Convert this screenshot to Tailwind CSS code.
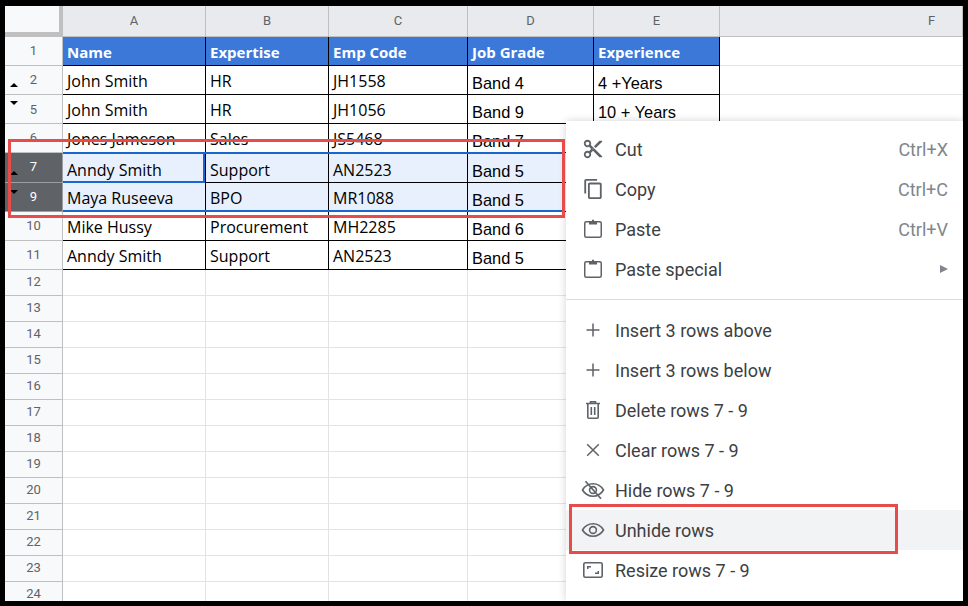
<!DOCTYPE html>
<html lang="en">
<head>
  <meta charset="UTF-8">
  <title>Unhide rows</title>
  <script src="https://cdn.jsdelivr.net/npm/@tailwindcss/browser@4"></script>
</head>
<body class="bg-black">
<div class="relative w-[968px] h-[606px] bg-black pt-[6px] pl-[5px] overflow-hidden">
  <div id="sheet" class="relative w-[958px] h-[595px] bg-white overflow-hidden grid grid-cols-[58px_143px_123px_139px_126px_126px_243px] auto-rows-min font-['Open_Sans',sans-serif] text-[16px] text-black"></div>

  <!-- hidden row arrows -->
  <div class="absolute left-[10px] top-[83px] w-0 h-0 border-x-[4px] border-x-transparent border-b-[4px] border-b-black"></div>
  <div class="absolute left-[10px] top-[101px] w-0 h-0 border-x-[4px] border-x-transparent border-t-[4px] border-t-black"></div>
  <div class="absolute left-[10px] top-[171px] w-0 h-0 border-x-[4px] border-x-transparent border-b-[4px] border-b-black"></div>
  <div class="absolute left-[10px] top-[190px] w-0 h-0 border-x-[4px] border-x-transparent border-t-[4px] border-t-black"></div>

  <!-- active cell + selection edges -->
  <div class="absolute left-[63px] top-[152px] w-[501px] h-[2px] bg-[#1a66d0]"></div>
  <div class="absolute left-[63px] top-[210px] w-[501px] h-[2px] bg-[#1a66d0]"></div>
  <div class="absolute left-[63px] top-[152px] w-[142px] h-[31px] border-2 border-l-0 border-[#1a66d0]"></div>

  <!-- context menu -->
  <div class="absolute left-[566px] top-[121px] w-[397px] h-[480px] bg-white shadow-[0_0_8px_rgba(0,0,0,0.18)] pt-[8px] font-['Roboto',sans-serif] text-[18px] text-[#3c4043]">
    <div class="flex items-center h-10 pl-[16px] pr-[15px]">
      <svg class="w-[22px] h-[22px] mr-[11px] shrink-0 fill-[#5f6368]" viewBox="0 0 24 24"><path d="M9.64 7.64c.23-.5.36-1.05.36-1.64 0-2.21-1.79-4-4-4S2 3.79 2 6s1.79 4 4 4c.59 0 1.14-.13 1.64-.36L10 12l-2.36 2.36C7.14 14.13 6.59 14 6 14c-2.21 0-4 1.79-4 4s1.79 4 4 4 4-1.79 4-4c0-.59-.13-1.14-.36-1.64L12 14l7 7h3v-1L9.64 7.64zM6 8c-1.1 0-2-.89-2-2s.9-2 2-2 2 .89 2 2-.9 2-2 2zm0 12c-1.1 0-2-.89-2-2s.9-2 2-2 2 .89 2 2-.9 2-2 2zm6-7.5c-.28 0-.5-.22-.5-.5s.22-.5.5-.5.5.22.5.5-.22.5-.5.5zM19 3l-6 6 2 2 7-7V3h-3z"/></svg>
      <span>Cut</span><span class="ml-auto text-[#80868b]">Ctrl+X</span>
    </div>
    <div class="flex items-center h-10 pl-[16px] pr-[15px]">
      <svg class="w-[22px] h-[22px] mr-[11px] shrink-0 fill-[#5f6368]" viewBox="0 0 24 24"><path d="M16 1H4c-1.1 0-2 .9-2 2v14h2V3h12V1zm3 4H8c-1.1 0-2 .9-2 2v14c0 1.100.9 2 2 2h11c1.100 0 2-.9 2-2V7c0-1.100-.9-2-2-2zm0 16H8V7h11v14z" transform="translate(0.5 0)"/></svg>
      <span>Copy</span><span class="ml-auto text-[#80868b]">Ctrl+C</span>
    </div>
    <div class="flex items-center h-10 pl-[16px] pr-[15px]">
      <svg class="w-[22px] h-[22px] mr-[11px] shrink-0" viewBox="0 0 22 22"><rect x="2.750" y="3.750" width="16.500" height="15.500" rx="1.500" fill="none" stroke="#5f6368" stroke-width="1.500"/><path d="M7 3h8v3.500H7zM10 1.800h2v2h-2z" fill="#5f6368"/></svg>
      <span>Paste</span><span class="ml-auto text-[#80868b]">Ctrl+V</span>
    </div>
    <div class="flex items-center h-10 pl-[16px] pr-[15px]">
      <svg class="w-[22px] h-[22px] mr-[11px] shrink-0" viewBox="0 0 22 22"><rect x="2.750" y="3.750" width="16.500" height="15.500" rx="1.500" fill="none" stroke="#5f6368" stroke-width="1.500"/><path d="M7 3h8v3.500H7zM10 1.800h2v2h-2z" fill="#5f6368"/></svg>
      <span>Paste special</span>
      <span class="ml-auto w-0 h-0 border-y-[4px] border-y-transparent border-l-[8px] border-l-[#80868b]"></span>
    </div>
    <div class="h-px bg-[#dadce0] mt-[10px] mb-[10px]"></div>
    <div class="flex items-center h-10 pl-[16px] pr-[15px]">
      <svg class="w-[22px] h-[22px] mr-[11px] shrink-0" viewBox="0 0 22 22"><path d="M11 4.500v13M4.500 11h13" stroke="#5f6368" stroke-width="1.500" fill="none"/></svg>
      <span>Insert 3 rows above</span>
    </div>
    <div class="flex items-center h-10 pl-[16px] pr-[15px]">
      <svg class="w-[22px] h-[22px] mr-[11px] shrink-0" viewBox="0 0 22 22"><path d="M11 4.500v13M4.500 11h13" stroke="#5f6368" stroke-width="1.500" fill="none"/></svg>
      <span>Insert 3 rows below</span>
    </div>
    <div class="flex items-center h-10 pl-[16px] pr-[15px]">
      <svg class="w-[22px] h-[22px] mr-[11px] shrink-0" viewBox="0 0 22 22"><path d="M4 4.500h14M8.500 4V2.800h5V4M5.800 5v13.200a1 1 0 0 0 1 1h8.400a1 1 0 0 0 1-1V5M9.300 8v8M12.700 8v8" stroke="#5f6368" stroke-width="1.600" fill="none"/></svg>
      <span>Delete rows 7 - 9</span>
    </div>
    <div class="flex items-center h-10 pl-[16px] pr-[15px]">
      <svg class="w-[22px] h-[22px] mr-[11px] shrink-0" viewBox="0 0 22 22"><path d="M5.200 5.200l11.600 11.600M16.800 5.200L5.200 16.800" stroke="#5f6368" stroke-width="1.500" fill="none"/></svg>
      <span>Clear rows 7 - 9</span>
    </div>
    <div class="flex items-center h-10 pl-[16px] pr-[15px]">
      <svg class="w-[22px] h-[22px] mr-[11px] shrink-0 overflow-visible" viewBox="0 0 22 22"><path d="M0.500 11C3 6.800 7 4.800 11 4.800s8 2 10.500 6.200C19 15.200 15 17.200 11 17.200S3 15.200 0.500 11z" stroke="#5f6368" stroke-width="1.600" fill="none"/><circle cx="11" cy="11" r="3.400" stroke="#5f6368" stroke-width="1.600" fill="none"/><path d="M3.500 2.200l15.500 17.600" stroke="#5f6368" stroke-width="1.700" fill="none"/></svg>
      <span>Hide rows 7 - 9</span>
    </div>
    <div class="flex items-center h-10 pl-[16px] pr-[15px] bg-[#f1f3f4]">
      <svg class="w-[22px] h-[22px] mr-[11px] shrink-0 overflow-visible" viewBox="0 0 22 22"><path d="M0.500 11C3 6.800 7 4.800 11 4.800s8 2 10.500 6.200C19 15.200 15 17.200 11 17.200S3 15.200 0.500 11z" stroke="#5f6368" stroke-width="1.600" fill="none"/><circle cx="11" cy="11" r="3.400" stroke="#5f6368" stroke-width="1.600" fill="none"/></svg>
      <span>Unhide rows</span>
    </div>
    <div class="flex items-center h-10 pl-[16px] pr-[15px]">
      <svg class="w-[22px] h-[22px] mr-[11px] shrink-0 overflow-visible" viewBox="0 0 22 22"><rect x="1.800" y="3.800" width="18.400" height="14.400" rx="1.500" stroke="#5f6368" stroke-width="1.600" fill="none"/><path d="M5 7h4v1.500H6.500V10H5zM17 15h-4v-1.500h2.500V12H17z" fill="#5f6368"/></svg>
      <span>Resize rows 7 - 9</span>
    </div>
  </div>

  <!-- red callouts -->
  <div class="absolute left-[8px] top-[139px] w-[557px] h-[79px] border-[3px] border-[#e84c4a]"></div>
  <div class="absolute left-[569px] top-[504px] w-[329px] h-[50px] border-[3px] border-[#e84c4a]"></div>
</div>

<script>
  const people = [
    [1, "Name", "Expertise", "Emp Code", "Job Grade", "Experience"],
    [2, "John Smith", "HR", "JH1558", "Band 4", "4 +Years"],
    [5, "John Smith", "HR", "JH1056", "Band 9", "10 + Years"],
    [6, "Jones Jameson", "Sales", "JS5468", "Band 7", ""],
    [7, "Anndy Smith", "Support", "AN2523", "Band 5", ""],
    [9, "Maya Ruseeva", "BPO", "MR1088", "Band 5", ""],
    [10, "Mike Hussy", "Procurement", "MH2285", "Band 6", ""],
    [11, "Anndy Smith", "Support", "AN2523", "Band 5", ""],
  ];
  const colHead = "h-[31px] flex items-center justify-center bg-[#e8eaed] border-r border-b border-[#c0c0c0] font-['Roboto',sans-serif] text-[13px] text-[#5f6368]";

  let html = `<div class="h-[31px] bg-[#f8f9fa] border-r-[4px] border-b-[5px] border-[#c0c0c0] box-border"></div>`;
  "ABCDE".split("").forEach(c => { html += `<div class="${colHead}">${c}</div>`; });
  html += `<div class="${colHead} pl-[181px]">F</div>`;

  people.forEach((row, i) => {
    const selected = row[0] === 7 || row[0] === 9;
    const h = row[0] === 7 ? "h-[30px]" : "h-[29px]";
    const headColor = selected ? "bg-[#5f6368] text-white border-[#9aa0a6]" : "bg-[#f8f9fa] text-[#5f6368] border-[#c0c0c0]";
    const headPad = row[0] === 5 ? "pt-[2px]" : (row[0] === 7 ? "pb-[2px]" : "");
    html += `<div class="${h} flex items-center justify-center border-r border-b ${headColor} ${headPad} font-['Roboto',sans-serif] text-[13px]">${row[0]}</div>`;
    for (let c = 1; c <= 5; c++) {
      let style;
      if (i === 0) style = "bg-[#3c78d8] text-white font-bold text-[15px] items-center pt-[2px]";
      else if (c >= 4) style = "font-['Liberation_Sans',sans-serif] text-[16.4px] leading-[20px] items-end pb-[1px]";
      else style = row[0] === 7 ? "items-center pt-[4px]" : "items-center pt-[2px]";
      const bg = selected ? "bg-[#e7f0fc]" : "";
      html += `<div class="${h} flex px-[4px] border-r border-b border-black whitespace-nowrap ${style} ${bg}">${row[c]}</div>`;
    }
    html += `<div class="${h} border-r border-b border-[#e2e3e3]"></div>`;
  });

  for (let n = 12; n <= 24; n++) {
    html += `<div class="h-[26px] flex items-center justify-center pb-[2px] bg-[#f8f9fa] border-r border-b border-[#c0c0c0] font-['Roboto',sans-serif] text-[13px] text-[#5f6368]">${n}</div>`;
    for (let c = 0; c < 6; c++) html += `<div class="h-[26px] border-r border-b border-[#e2e3e3]"></div>`;
  }
  document.getElementById("sheet").innerHTML = html;
</script>
</body>
</html>
